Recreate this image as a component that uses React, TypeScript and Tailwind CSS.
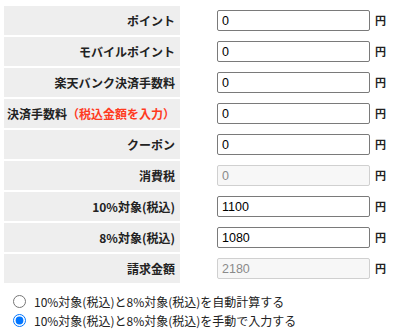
import React from "react";

const rows: { label: React.ReactNode; value: string; disabled?: boolean }[] = [
  { label: "ポイント", value: "0" },
  { label: "モバイルポイント", value: "0" },
  { label: "楽天バンク決済手数料", value: "0" },
  {
    label: (
      <>
        決済手数料<span className="text-[#ff3b1f]">（税込金額を入力）</span>
      </>
    ),
    value: "0",
  },
  { label: "クーポン", value: "0" },
  { label: "消費税", value: "0", disabled: true },
  { label: "10%対象(税込)", value: "1100" },
  { label: "8%対象(税込)", value: "1080" },
  { label: "請求金額", value: "2180", disabled: true },
];

export default function App() {
  return (
    <div
      className="w-[393px] h-[332px] bg-white text-[#222] overflow-hidden"
      style={{ fontFamily: '"Noto Sans CJK JP", "Noto Sans", sans-serif' }}
    >
      <div className="flex flex-col gap-[2px] pt-[6px] pl-[4px]">
        {rows.map((r, i) => (
          <div key={i} className="flex items-center h-[29px]">
            <div className="w-[176px] h-full bg-[#eeeeee] flex items-center justify-end pr-[5px] text-[12px] font-bold leading-none whitespace-nowrap">
              {r.label}
            </div>
            <input
              readOnly
              disabled={r.disabled}
              value={r.value}
              className={
                "ml-[37px] w-[153px] h-[21px] rounded-[2px] border px-[4px] text-[12.5px] outline-none " +
                (r.disabled
                  ? "bg-[#f7f7f7] border-[#d0d0d0] text-[#8a8a8a]"
                  : "bg-white border-[#7a7a7a] text-black")
              }
              style={{ fontFamily: '"Liberation Sans", Arial, sans-serif' }}
            />
            <span className="ml-[5px] text-[11px] font-bold leading-none">円</span>
          </div>
        ))}
      </div>
      <div className="flex flex-col mt-[9px] pl-[13px] text-[12px] leading-none">
        <label className="flex items-center h-[19px]">
          <input type="radio" name="calc" className="m-0 w-[13px] h-[13px]" />
          <span className="ml-[8px]">10%対象(税込)と8%対象(税込)を自動計算する</span>
        </label>
        <label className="flex items-center h-[19px]">
          <input type="radio" name="calc" defaultChecked className="m-0 w-[13px] h-[13px]" />
          <span className="ml-[8px]">10%対象(税込)と8%対象(税込)を手動で入力する</span>
        </label>
      </div>
    </div>
  );
}
